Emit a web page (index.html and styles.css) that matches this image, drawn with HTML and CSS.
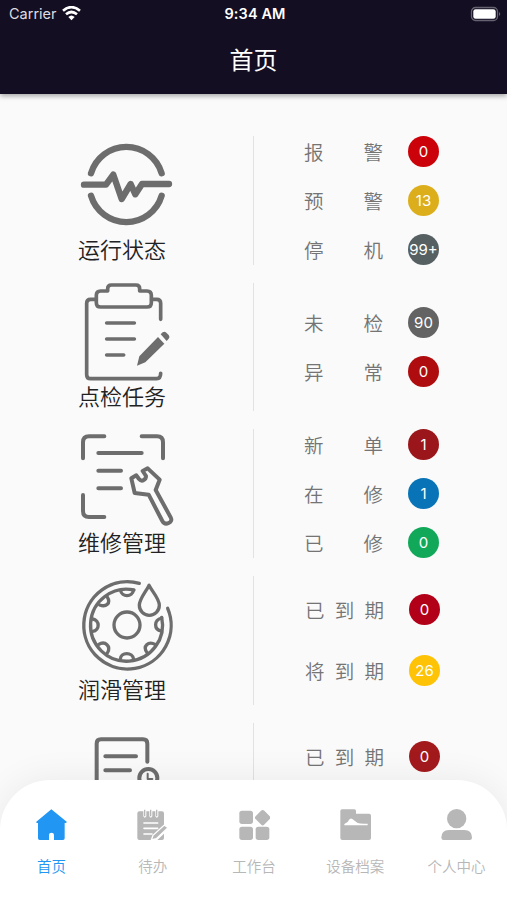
FILE: index.html
```html
<!DOCTYPE html>
<html lang="zh-CN">
<head>
    <meta charset="UTF-8">
    <title>首页</title>
    <link rel="stylesheet" href="styles.css">
</head>
<body>
    <header class="header">
        <div class="status-bar">
            <div class="carrier">
                <span>Carrier</span>
                <svg width="19" height="15" viewBox="0 0 57 45" fill="none" stroke="#fff" stroke-width="8">
                    <path d="M3 14Q28 -7 54 14"/>
                    <path d="M12 25Q28 11 45 25"/>
                    <path d="M19 33Q28 24 38 33L28.500 43Z" fill="#fff" stroke="none"/>
                </svg>
            </div>
            <div class="time">9:34 AM</div>
            <div class="battery">
                <svg width="31" height="16" viewBox="0 0 31 16">
                    <rect x="1.500" y="1.500" width="26" height="13" rx="4" fill="none" stroke="#66626f" stroke-width="1.300"/>
                    <rect x="3.300" y="3.300" width="22.400" height="9.400" rx="2.300" fill="#fff"/>
                    <path d="M29 6Q31.500 8 29 10Z" fill="#66626f"/>
                </svg>
            </div>
        </div>
        <h1 class="title">首页</h1>
    </header>

    <main class="content">
        <section class="row">
            <div class="entry">
                <svg class="icon" viewBox="48 18 300 300" stroke-width="19">
                    <path d="M93 130A110.500 110.500 0 0 1 305 130M93 197A110.500 110.500 0 0 0 305 197"/>
                    <path d="M72 164H138L160 134L185 207L212 162L226 193L246 162H327"/>
                </svg>
                <span class="name">运行状态</span>
            </div>
            <div class="stats">
                <div class="stat"><span class="label"><i>报</i><i>警</i></span><b class="badge red">0</b></div>
                <div class="stat"><span class="label"><i>预</i><i>警</i></span><b class="badge gold">13</b></div>
                <div class="stat"><span class="label"><i>停</i><i>机</i></span><b class="badge slate">99+</b></div>
            </div>
        </section>

        <section class="row">
            <div class="entry">
                <svg class="icon" viewBox="48 23 300 300" stroke-width="11">
                    <path d="M107 72H92Q80 72 80 84V298Q80 310 92 310H290Q302 310 302 294M275 72H290Q302 72 302 84V132"/>
                    <path d="M143 47V40Q143 29 154 29H228Q239 29 239 40V47H261Q274 47 274 60V82Q274 95 261 95H122Q109 95 109 82V60Q109 47 122 47Z"/>
                    <path d="M140 143H223M140 191H223M140 239H191"/>
                    <path class="solid" d="M294 185L313 205L256 261L231 271L238 243ZM302 177L308 171Q314 167 319 172L326 179Q331 185 326 190L320 197Z"/>
                </svg>
                <span class="name">点检任务</span>
            </div>
            <div class="stats">
                <div class="stat"><span class="label"><i>未</i><i>检</i></span><b class="badge gray">90</b></div>
                <div class="stat"><span class="label"><i>异</i><i>常</i></span><b class="badge crimson">0</b></div>
            </div>
        </section>

        <section class="row">
            <div class="entry">
                <svg class="icon" viewBox="48 28 300 300" stroke-width="12">
                    <path d="M69 116V68Q69 50 87 50H133M245 50H291Q309 50 309 68V116M69 226V274Q69 292 87 292H133"/>
                    <path d="M115 100H245M115 153H183M115 206H183"/>
                    <path d="M229 167L214 176L224 220L266 225L307 304Q314 316 326 310Q338 304 332 293L287 211L299 180L263 146L248 154L258 169Q258 178 250 182Q243 185 237 178Z"/>
                </svg>
                <span class="name">维修管理</span>
            </div>
            <div class="stats">
                <div class="stat"><span class="label"><i>新</i><i>单</i></span><b class="badge maroon">1</b></div>
                <div class="stat"><span class="label"><i>在</i><i>修</i></span><b class="badge blue">1</b></div>
                <div class="stat"><span class="label"><i>已</i><i>修</i></span><b class="badge green">0</b></div>
            </div>
        </section>

        <section class="row">
            <div class="entry">
                <svg class="icon" viewBox="48 18 300 300" stroke-width="10">
                    <path d="M238 40A131 131 0 1 0 323 115"/>
                    <path d="M222 60A108 108 0 1 0 305 142"/>
                    <circle cx="201" cy="165" r="39"/>
                    <path d="M267 46C259 64 238 86 238 106A29 29 0 0 0 298 106C298 86 276 64 267 46Z"/>
                    <path d="M182 61C184 82 218 82 220 61M141 80C155 101 137 112 119 105M98 147C120 150 120 181 98 184M115 224C136 211 154 229 142 249M181 268C181 245 219 245 221 268M262 249C246 228 265 212 287 224M305 144C281 150 281 179 304 183"/>
                </svg>
                <span class="name">润滑管理</span>
            </div>
            <div class="stats wide">
                <div class="stat"><span class="label"><i>已</i><i>到</i><i>期</i></span><b class="badge cherry">0</b></div>
                <div class="stat"><span class="label"><i>将</i><i>到</i><i>期</i></span><b class="badge amber">26</b></div>
            </div>
        </section>

        <section class="row">
            <div class="entry">
                <svg class="icon" viewBox="48 8 300 300" stroke-width="12">
                    <path d="M262 124V70Q262 57 249 57H123Q110 57 110 70V290H230"/>
                    <path d="M136 108H228M136 150H210"/>
                    <circle cx="265" cy="173" r="27"/>
                    <path d="M263 160V176H277" stroke-width="6"/>
                </svg>
            </div>
            <div class="stats wide top">
                <div class="stat"><span class="label"><i>已</i><i>到</i><i>期</i></span><b class="badge brick">0</b></div>
            </div>
        </section>
    </main>

    <nav class="tabs">
        <a class="tab active">
            <svg viewBox="0 0 93 93"><path d="M46 1L92 38Q93 43 86 42V88Q86 93 81 93H54V78Q54 71 46.500 71Q39 71 39 78V93H11Q6 93 6 88V42Q-1 43 1 38Z"/></svg>
            <span>首页</span>
        </a>
        <a class="tab">
            <svg viewBox="0 0 93 93">
                <path d="M7 7H19V22Q23 30 28 22V7H37V22Q41 30 46 22V7H55V22Q59 30 64 22V7H75Q81 7 81 13V55L42 93H7Q1 93 1 87V13Q1 7 7 7ZM81 74V87Q81 93 75 93H61Z"/>
                <path d="M23 2V22M41 2V22M59 2V22" stroke="#b7b7b7" stroke-width="4"/>
                <path d="M21 42H62M21 58H62M21 75H45" stroke="#fff" stroke-width="5" stroke-linecap="round"/>
                <path d="M43 93L48 79L82 48L93 56L58 89Z" stroke="#fff" stroke-width="4"/>
            </svg>
            <span>待办</span>
        </a>
        <a class="tab">
            <svg viewBox="0 0 93 93">
                <rect x="1" y="5" width="41" height="40" rx="8"/>
                <rect x="1" y="53" width="41" height="40" rx="8"/>
                <rect x="50" y="53" width="41" height="40" rx="8"/>
                <rect x="53" y="8" width="36" height="36" rx="6" transform="rotate(45 71 26)"/>
            </svg>
            <span>工作台</span>
        </a>
        <a class="tab">
            <svg viewBox="0 0 93 93">
                <path d="M6 1H43Q48 1 48 6V14H87Q93 14 93 20V87Q93 93 87 93H7Q1 93 1 87V6Q1 1 6 1Z"/>
                <path d="M13 45L23 39Q30 23 38 31L53 42Q60 45 83 44V49H13Z" fill="#fff"/>
            </svg>
            <span>设备档案</span>
        </a>
        <a class="tab">
            <svg viewBox="0 0 93 93">
                <circle cx="47" cy="29" r="29"/>
                <path d="M24 63H70Q93 63 93 86Q93 93 86 93H8Q1 93 1 86Q1 63 24 63Z"/>
            </svg>
            <span>个人中心</span>
        </a>
    </nav>
</body>
</html>
```

FILE: styles.css
```css
* {
    box-sizing: border-box;
}
body {
    margin: 0;
    height: 900px;
    overflow: hidden;
    display: flex;
    flex-direction: column;
    background: #fafafa;
    font-family: Inter, "Noto Sans CJK SC", sans-serif;
}
.header {
    position: relative;
    z-index: 1;
    flex: none;
    height: 94px;
    background: #130e22;
    color: #fff;
    box-shadow: 0 2px 5px rgba(0,0,0,0.35);
}
.status-bar {
    display: grid;
    grid-template-columns: 1fr auto 1fr;
    align-items: center;
    height: 27px;
    padding: 0 6px 0 9px;
}
.carrier {
    display: flex;
    align-items: center;
    gap: 5px;
    color: #dddce0;
    font-size: 14.5px;
}
.time {
    font-size: 14.5px;
    font-weight: 600;
    letter-spacing: 0.1px;
}
.battery {
    display: flex;
    justify-content: flex-end;
}
.title {
    margin: 0;
    padding-top: 16px;
    font-size: 24px;
    font-weight: 400;
    line-height: 36px;
    text-align: center;
}
.content {
    flex: none;
    height: 686px;
    padding-top: 33px;
    overflow: hidden;
}
.row {
    display: flex;
    height: 146.67px;
    padding: 9px 0;
}
.entry {
    width: 254px;
    border-right: 1px solid #e2e2e2;
    padding-left: 76px;
}
.icon {
    display: block;
    width: 100px;
    height: 100px;
    fill: none;
    stroke: #6d6d6d;
    stroke-linecap: round;
    stroke-linejoin: round;
}
.icon .solid {
    fill: #6d6d6d;
    stroke: none;
}
.name {
    display: block;
    margin-left: 2px;
    font-size: 22px;
    font-weight: 350;
    line-height: 28px;
    color: #222;
}
.stats {
    display: flex;
    flex-direction: column;
    justify-content: center;
    gap: 18px;
    padding-left: 50px;
}
.stats.wide {
    gap: 30px;
    padding-left: 51px;
}
.stats.top {
    justify-content: flex-start;
    padding-top: 18px;
}
.stat {
    display: flex;
    align-items: center;
    gap: 25px;
    height: 31px;
}
.label {
    display: flex;
    justify-content: space-between;
    width: 79px;
    padding-top: 3px;
    font-size: 19.5px;
    font-weight: 350;
    line-height: 30px;
    color: #747474;
}
.label i {
    font-style: normal;
}
.badge {
    width: 31px;
    height: 31px;
    display: flex;
    align-items: center;
    justify-content: center;
    border-radius: 50%;
    color: #fff;
    font-size: 15px;
    font-weight: 400;
}
.red { background: #cb0209; }
.gold { background: #dcae1c; }
.slate { background: #566062; }
.gray { background: #636363; }
.crimson { background: #ae0c0e; }
.maroon { background: #9a161a; }
.blue { background: #0873b6; }
.green { background: #12a85a; }
.cherry { background: #b20018; }
.amber { background: #fec306; }
.brick { background: #a31a1d; }
.tabs {
    flex: none;
    display: flex;
    height: 120px;
    padding: 29px 0 0 1px;
    background: #fff;
    border-radius: 50px 50px 0 0;
    box-shadow: 0 0 36px rgba(0,0,0,0.07);
}
.tab {
    flex: 1;
    display: flex;
    flex-direction: column;
    align-items: center;
    gap: 16px;
    color: #b7b7b7;
    font-size: 14.5px;
    font-weight: 350;
    line-height: 22px;
}
.tab.active {
    color: #2196f3;
}
.tab svg {
    width: 31px;
    height: 31px;
    fill: currentColor;
}
```
